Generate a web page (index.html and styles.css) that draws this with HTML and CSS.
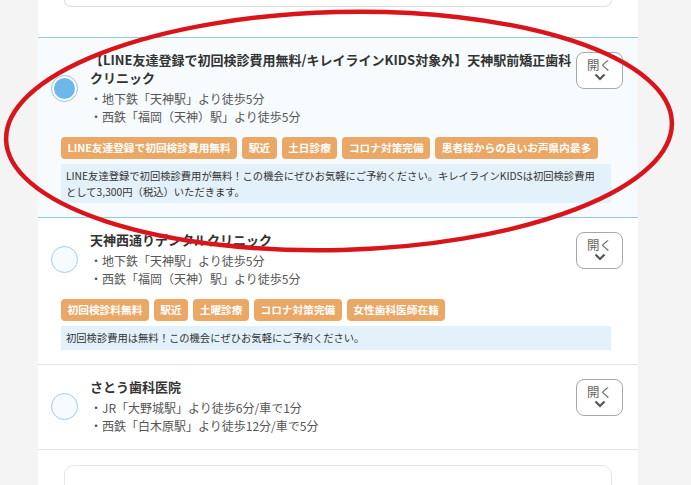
FILE: index.html
```html
<!DOCTYPE html>
<html>
	<head>
		<meta charset="UTF-8">
		<title>クリニック一覧</title>
		<link rel="stylesheet" href="styles.css">
	</head>
	<body>

		<div class="page">
			<div class="prev-card"></div>

			<ul class="clinics">
				<li class="clinic is-selected">
					<div class="clinic-head">
						<span class="radio"></span>
						<div class="clinic-text">
							<p class="clinic-name">【LINE友達登録で初回検診費用無料/キレイラインKIDS対象外】天神駅前矯正歯科クリニック</p>
							<ul class="access">
								<li>・地下鉄「天神駅」より徒歩5分</li>
								<li>・西鉄「福岡（天神）駅」より徒歩5分</li>
							</ul>
						</div>
						<button class="open-btn" type="button">
							<span>開く</span>
							<svg width="12" height="8" viewBox="0 0 12 8"><path d="M1.5 1.5 L6 6 L10.5 1.5" fill="none" stroke="#555" stroke-width="2.2"/></svg>
						</button>
					</div>
					<ul class="tags">
						<li>LINE友達登録で初回検診費用無料</li>
						<li>駅近</li>
						<li>土日診療</li>
						<li>コロナ対策完備</li>
						<li>患者様からの良いお声県内最多</li>
					</ul>
					<p class="note">LINE友達登録で初回検診費用が無料！この機会にぜひお気軽にご予約ください。キレイラインKIDSは初回検診費用として3,300円（税込）いただきます。</p>
				</li>

				<li class="clinic">
					<div class="clinic-head">
						<span class="radio"></span>
						<div class="clinic-text">
							<p class="clinic-name">天神西通りデンタルクリニック</p>
							<ul class="access">
								<li>・地下鉄「天神駅」より徒歩5分</li>
								<li>・西鉄「福岡（天神）駅」より徒歩5分</li>
							</ul>
						</div>
						<button class="open-btn" type="button">
							<span>開く</span>
							<svg width="12" height="8" viewBox="0 0 12 8"><path d="M1.5 1.5 L6 6 L10.5 1.5" fill="none" stroke="#555" stroke-width="2.2"/></svg>
						</button>
					</div>
					<ul class="tags">
						<li>初回検診料無料</li>
						<li>駅近</li>
						<li>土曜診療</li>
						<li>コロナ対策完備</li>
						<li>女性歯科医師在籍</li>
					</ul>
					<p class="note">初回検診費用は無料！この機会にぜひお気軽にご予約ください。</p>
				</li>

				<li class="clinic">
					<div class="clinic-head">
						<span class="radio"></span>
						<div class="clinic-text">
							<p class="clinic-name">さとう歯科医院</p>
							<ul class="access">
								<li>・JR「大野城駅」より徒歩6分/車で1分</li>
								<li>・西鉄「白木原駅」より徒歩12分/車で5分</li>
							</ul>
						</div>
						<button class="open-btn" type="button">
							<span>開く</span>
							<svg width="12" height="8" viewBox="0 0 12 8"><path d="M1.5 1.5 L6 6 L10.5 1.5" fill="none" stroke="#555" stroke-width="2.2"/></svg>
						</button>
					</div>
				</li>
			</ul>

			<div class="next-card"></div>
		</div>

		<!-- red hand-drawn circle over the first clinic -->
		<svg class="marker" width="691" height="485" viewBox="0 0 691 485">
			<ellipse cx="339" cy="131" rx="333" ry="119" transform="rotate(-1.5 339 131)" fill="none" stroke="#d9141b" stroke-width="4.5"/>
		</svg>

	</body>
</html>
```

FILE: styles.css
```css
*{
	box-sizing: border-box;
}
body{
	margin: 0;
	position: relative;
	background-color: #f4f4f4;
	font-family: "Noto Sans CJK JP", "Noto Sans", sans-serif;
	color: #333;
}
ul{
	list-style: none;
	margin: 0;
	padding: 0;
}
p{
	margin: 0;
}

.page{
	width: 600px;
	min-height: 485px;
	margin-left: 38px;
	background-color: #fff;
	overflow: hidden;
}

.prev-card{
	height: 7px;
	margin: 0 26px;
	border: 1px solid #dedede;
	border-top: none;
	border-radius: 0 0 10px 10px;
}

.clinics{
	margin-top: 30px;
}
.clinic{
	padding: 13px 15px 14px 13px;
	border-bottom: 1px solid #e6e6e6;
}
.clinic.is-selected{
	background-color: #f7fbfd;
	border-top: 1px solid #93cbd8;
	border-bottom: 1px solid #93cbd8;
}

.clinic-head{
	display: flex;
}
.radio{
	flex: none;
	align-self: center;
	width: 27px;
	height: 27px;
	border: 1.5px solid #9ccdec;
	border-radius: 50%;
	background-color: #f6fbff;
	position: relative;
}
.is-selected .radio{
	background-color: #fff;
	border-color: #8fc5ea;
}
.is-selected .radio::after{
	content: "";
	position: absolute;
	top: 2px;
	left: 2px;
	right: 2px;
	bottom: 2px;
	border-radius: 50%;
	background-color: #6cb8ea;
}

.clinic-text{
	flex: 1;
	margin: 0 4px 0 12px;
}
.clinic-name{
	font-size: 13px;
	font-weight: bold;
	line-height: 18px;
	color: #333;
}
.access{
	margin-top: 3px;
	font-size: 12px;
	line-height: 18px;
	color: #555;
}

.open-btn{
	flex: none;
	align-self: flex-start;
	width: 47px;
	height: 37px;
	margin-top: 1px;
	padding: 5px 0 0;
	border: 1px solid #a8a8a8;
	border-radius: 8px;
	background-color: #fff;
	display: flex;
	flex-direction: column;
	align-items: center;
	font-family: inherit;
	font-size: 12.5px;
	line-height: 14px;
	color: #666;
	cursor: pointer;
}
.open-btn svg{
	display: block;
	margin-top: 1px;
}

.tags{
	display: flex;
	flex-wrap: wrap;
	gap: 5px;
	margin: 11px 0 0 10px;
}
.tags li{
	height: 22px;
	padding: 0 6.5px;
	border-radius: 4px;
	background-color: #eaa766;
	color: #fff;
	font-size: 10.7px;
	font-weight: bold;
	line-height: 22px;
}

.note{
	margin: 5px 12px 0 10px;
	padding: 4px 10px 3px 5px;
	background-color: #e3f1fb;
	font-size: 10.3px;
	line-height: 16px;
	color: #333;
}
.clinic:not(.is-selected) .note{
	padding-top: 4px;
	padding-bottom: 4px;
}

.next-card{
	height: 40px;
	margin: 15px 26px 0;
	border: 1px solid #e6e6e6;
	border-radius: 10px;
}

.marker{
	position: absolute;
	top: 0;
	left: 0;
	pointer-events: none;
}
```
